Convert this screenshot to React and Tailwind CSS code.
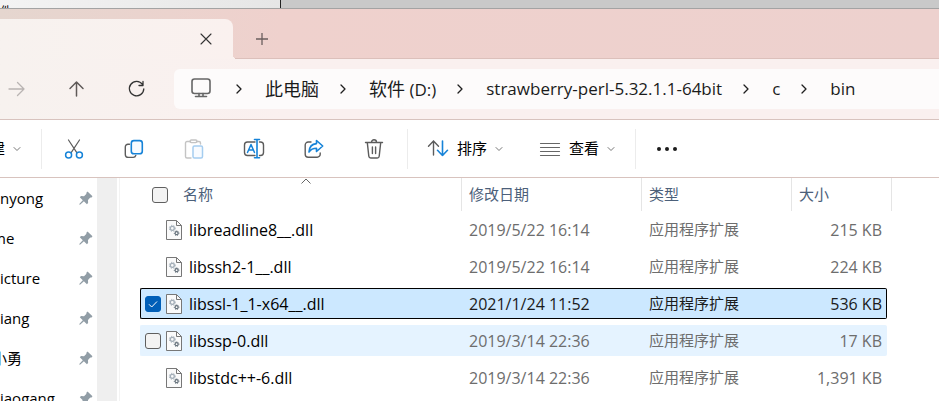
import { useState } from 'react';

const files = [
  { name: 'libreadline8__.dll', date: '2019/5/22 16:14', size: '215 KB' },
  { name: 'libssh2-1__.dll', date: '2019/5/22 16:14', size: '224 KB' },
  { name: 'libssl-1_1-x64__.dll', date: '2021/1/24 11:52', size: '536 KB' },
  { name: 'libssp-0.dll', date: '2019/3/14 22:36', size: '17 KB' },
  { name: 'libstdc++-6.dll', date: '2019/3/14 22:36', size: '1,391 KB' }
];

const pinned = [
  { label: 'nyong', className: '' },
  { label: 'me', className: '-ml-2' },
  { label: 'icture', className: '' },
  { label: 'iang', className: '' },
  { label: '小勇', className: '-ml-2' },
  { label: 'iaogang', className: '' }
];

const GRAY = '#5c5c5c';
const BLUE = '#1683d8';

const Icon = ({ size = 20, color = GRAY, width = 1.2, children }) => (
  <svg
    width={size}
    height={size}
    viewBox={`0 0 ${size} ${size}`}
    fill="none"
    stroke={color}
    strokeWidth={width}
    strokeLinecap="round"
    strokeLinejoin="round"
    className="shrink-0"
    aria-hidden="true"
  >
    {children}
  </svg>
);

const ChevronRight = () => (
  <Icon size={10} color="#1f1f1f" width={1.3}>
    <path d="M3 1l4 4-4 4" />
  </Icon>
);

const ChevronDown = () => (
  <Icon size={8} color="#777" width={1}>
    <path d="M1 2.5l3 3 3-3" />
  </Icon>
);

const CutIcon = () => (
  <Icon>
    <path d="M4.5 1l8.3 12.6M15.5 1L7.2 13.6" />
    <circle cx="4.6" cy="16" r="3" stroke={BLUE} strokeWidth="1.5" />
    <circle cx="15.4" cy="16" r="3" stroke={BLUE} strokeWidth="1.5" />
  </Icon>
);

const CopyIcon = () => (
  <Icon width={1.4}>
    <path d="M5.5 5.2H4A2.7 2.7 0 0 0 1.3 8v7.2a3.2 3.2 0 0 0 3.2 3.2h4.7a2.7 2.7 0 0 0 2.6-2" />
    <rect x="7.3" y="1.6" width="11" height="13.2" rx="2.6" fill="#f8fbff" stroke={BLUE} strokeWidth="1.6" />
  </Icon>
);

const PasteIcon = () => (
  <Icon color="#c4c4c4" width={1.4}>
    <path d="M6.5 2.5H3A1.500 1.500 0 0 0 1.5 4v13.500A1.500 1.500 0 0 0 3 19h4M12.500 2.500H15A1.500 1.500 0 0 1 16.500 4v1" />
    <rect x="6" y="1" width="7" height="2.6" rx="1.3" />
    <rect x="9" y="7" width="9.5" height="12" rx="1.5" fill="#f8fbff" stroke="#a5cdf0" strokeWidth="1.5" />
  </Icon>
);

const RenameIcon = () => (
  <Icon size={22} width={1.4}>
    <path d="M12 4H4.500a3 3 0 0 0-3 3v7.500a3 3 0 0 0 3 3H12M16.500 4h1a3 3 0 0 1 3 3v7.500a3 3 0 0 1-3 3h-1" />
    <path d="M4.500 14.500l3.500-8 3.500 8M5.700 12h4.600" stroke={BLUE} strokeWidth="1.5" />
    <path d="M14 1.500v18M11.500 1.500h5M11.500 19.800h5" stroke={BLUE} strokeWidth="1.6" />
  </Icon>
);

const ShareIcon = () => (
  <Icon width={1.4}>
    <path d="M7 3H4.200a3 3 0 0 0-3 3v9.200a3 3 0 0 0 3 3h9a3 3 0 0 0 3-3V14" />
    <path
      d="M12.500 1.500l6.200 5.500-6.200 5.500V9.300C9 9.300 6.700 10.500 5 13c.2-4.500 2.800-8 7.500-8.400z"
      stroke={BLUE}
      strokeWidth="1.6"
    />
  </Icon>
);

const TrashIcon = () => (
  <Icon width={1.4}>
    <path d="M1.500 3.500h17M3.300 3.700l1.500 13.500a2 2 0 0 0 2 1.800h6.400a2 2 0 0 0 2-1.800l1.500-13.500M7.500 3.300a2.500 2.500 0 0 1 5 0M8.400 8v6.500M11.600 8v6.500" />
  </Icon>
);

const SortIcon = () => (
  <Icon size={22} width={1.4}>
    <path d="M6.500 17V3M1.500 8.200l5-5.200 5 5.200" />
    <path d="M15.500 3v14.500M10.500 12.300l5 5.200 5-5.200" stroke={BLUE} strokeWidth="1.6" />
  </Icon>
);

const PinIcon = () => (
  <svg width="14" height="14" viewBox="0 0 14 14" fill="#919da6" className="shrink-0" aria-hidden="true">
    <path d="M8.500.5l5 4.800-1.300 1.400-.9-.2-2.300 2.600.1 3-1.200 1.100-3-3L1.300 13.500l-1 .2.200-1L3.800 9.300.8 6.200 2 5l3 .2 2.500-2.400-.3-.9z" />
  </svg>
);

const DllIcon = () => (
  <svg width="16" height="20" viewBox="0 0 16 20" fill="none" className="shrink-0" aria-hidden="true">
    <path d="M.5.5h10l5 5v14H.5z" fill="#fafafa" stroke="#777" />
    <path d="M10.500.5v5h5" stroke="#777" />
    <circle cx="6.300" cy="8.300" r="2" stroke="#a3aeb8" strokeWidth="1.300" />
    <circle cx="6.300" cy="8.300" r="3" stroke="#a3aeb8" strokeWidth="1" strokeDasharray="1.200 1.300" />
    <circle cx="10.600" cy="13.200" r="1.500" stroke="#66727c" strokeWidth="1.200" />
    <circle cx="10.600" cy="13.200" r="2.300" stroke="#66727c" strokeWidth="1" strokeDasharray="1 .9" />
  </svg>
);

const CheckBox = ({ label, checked, onChange }) => (
  <span className="relative flex w-4 h-4 shrink-0">
    <input
      type="checkbox"
      aria-label={label}
      checked={checked}
      onChange={onChange}
      className="appearance-none w-4 h-4 rounded-[3px] border border-[#5f5f5f] bg-[#f3f3f3] checked:bg-[#005fb8] checked:border-[#005fb8]"
    />
    {checked && (
      <svg className="absolute inset-0 pointer-events-none" width="16" height="16" viewBox="0 0 16 16" fill="none" stroke="#fff">
        <path d="M4 8.300l2.700 2.700L12 5.500" />
      </svg>
    )}
  </span>
);

const Divider = () => <div className="w-px h-10 bg-[#ececec] shrink-0" />;

const App = () => {
  const [selected, setSelected] = useState('libssl-1_1-x64__.dll');
  const [hovered, setHovered] = useState('libssp-0.dll');

  const toggle = (name) => setSelected((prev) => (prev === name ? '' : name));

  // Fondo y borde de cada celda según el estado de la fila
  const cellColor = (name) => {
    if (name === selected) return 'bg-[#cce8ff] border-black';
    if (name === hovered) return 'bg-[#e5f3ff] border-[#e5f3ff]';
    return 'border-transparent';
  };

  return (
    <div className="h-screen overflow-hidden flex flex-col bg-white text-black font-['Open_Sans','Noto_Sans_CJK_SC',sans-serif]">
      {/* Ventana de fondo */}
      <div className="flex h-[9px] shrink-0 overflow-hidden border-b border-[#a3a3a3]">
        <div className="w-[281px] bg-linear-to-r from-[#f3f3f3] to-[#e6e6e6] border-r border-[#222] text-xs leading-6">件</div>
        <div className="flex-1 bg-[#c9c9c9]" />
      </div>

      {/* Pestañas */}
      <header className="flex h-[50px] shrink-0 pt-[10px] bg-linear-to-r from-[#e5d6cf] via-[#efd1cd] via-30% to-[#edd1ce]">
        <div className="relative flex items-center justify-end w-[233px] pr-[17px] rounded-tr-lg bg-linear-to-r from-[#f7f2ef] to-[#faf1ef]">
          <button type="button" aria-label="关闭" className="w-5 h-5 flex items-center justify-center">
            <Icon size={12} color="#333" width={1.1}>
              <path d="M1 1l10 10M11 1L1 11" />
            </Icon>
          </button>
          {/* Curva inferior de la pestaña */}
          <span className="absolute -right-1 bottom-0 z-10 w-1 h-1 bg-[radial-gradient(circle_at_top_right,transparent_4px,#faf1ef_4px)]" />
        </div>
        <div className="flex-1 flex items-center pl-[22px] border-b border-[#dcc0bb]">
          <button type="button" aria-label="新建标签页" className="p-px">
            <Icon size={12} color="#6b5f5e" width={1.3}>
              <path d="M6 0v12M0 6h12" />
            </Icon>
          </button>
        </div>
      </header>

      {/* Barra de navegación */}
      <nav className="flex items-center h-[61px] shrink-0 border-b border-[#d8c3be] bg-linear-to-r from-[#f7f2ef] to-[#faf0ef] to-30%">
        <div className="flex items-center gap-10 pl-[7px] w-[174px] shrink-0">
          <button type="button" aria-label="前进">
            <Icon color="#b9b4b2" width={1.3}>
              <path d="M2 10h15M10.500 3.500L17 10l-6.500 6.500" />
            </Icon>
          </button>
          <button type="button" aria-label="向上">
            <Icon color="#5f5a58" width={1.5}>
              <path d="M9.500 17V3M3 9.500L9.500 3 16 9.500" />
            </Icon>
          </button>
          <button type="button" aria-label="刷新">
            <Icon color="#333" width={1.3}>
              <path d="M15.500 5.500A7.200 7.200 0 1 0 16.800 10M16 2.500v4h-4" />
            </Icon>
          </button>
        </div>
        <div className="flex items-center flex-1 h-10 pl-4 rounded-l-md bg-[#fdfbfb] whitespace-nowrap text-[17px] text-[#1b1b1b]">
          <Icon size={22} color="#666" width={1.6}>
            <rect x="2" y="1" width="18" height="14.500" rx="2.500" />
            <path d="M9 15.500V18M13 15.500V18M5.500 18.500h11" />
          </Icon>
          <div className="flex items-center pl-[22px]">
            <ChevronRight />
            <a href="#pc" className="pl-[21px] pr-[19px] text-lg">此电脑</a>
            <ChevronRight />
            <a href="#d" className="pl-[21px] pr-[19px]"><span className="text-lg">软件</span> (D:)</a>
            <ChevronRight />
            <a href="#perl" className="pl-[21px] pr-[19px]">strawberry-perl-5.32.1.1-64bit</a>
            <ChevronRight />
            <a href="#c" className="pl-[21px] pr-[19px]">c</a>
            <ChevronRight />
            <a href="#bin" className="pl-[21px] pr-[19px]">bin</a>
          </div>
        </div>
      </nav>

      {/* Barra de herramientas */}
      <div className="flex items-center h-[58px] shrink-0 border-b border-[#d8c3be] text-[15px] whitespace-nowrap">
        <button type="button" className="flex items-center gap-2 w-[41px] -ml-[10px] mr-[10px] shrink-0">
          建 <ChevronDown />
        </button>
        <Divider />
        <div className="flex items-center gap-10 pl-[22px] pr-[23px]">
          <button type="button" aria-label="剪切"><CutIcon /></button>
          <button type="button" aria-label="复制"><CopyIcon /></button>
          <button type="button" aria-label="粘贴" disabled><PasteIcon /></button>
          <button type="button" aria-label="重命名" className="-mx-px"><RenameIcon /></button>
          <button type="button" aria-label="共享"><ShareIcon /></button>
          <button type="button" aria-label="删除"><TrashIcon /></button>
        </div>
        <Divider />
        <div className="flex items-center gap-9 pl-[19px] pr-5">
          <button type="button" className="flex items-center gap-2">
            <SortIcon /> 排序 <ChevronDown />
          </button>
          <button type="button" className="flex items-center gap-2">
            <Icon size={22} color="#666">
              <path d="M1.500 5.500h19M1.500 9.500h19M1.500 13.500h19M1.500 17.500h19" />
            </Icon>
            查看 <ChevronDown />
          </button>
        </div>
        <Divider />
        <button type="button" aria-label="更多" className="ml-5">
          <svg width="22" height="6" viewBox="0 0 22 6" fill="#1b1b1b">
            <circle cx="3" cy="3" r="2" />
            <circle cx="11" cy="3" r="2" />
            <circle cx="19" cy="3" r="2" />
          </svg>
        </button>
      </div>

      <div className="flex flex-1 min-h-0">
        {/* Acceso rápido */}
        <aside className="w-[97px] shrink-0 overflow-hidden">
          <ul className="text-[15px]">
            {pinned.map(({ label, className }) => (
              <li key={label} className="flex items-center justify-between h-10 pr-1 whitespace-nowrap">
                <span className={className}>{label}</span>
                <PinIcon />
              </li>
            ))}
          </ul>
        </aside>
        <div className="w-5 shrink-0 bg-[#efefef]" />

        {/* Lista de archivos */}
        <main className="flex-1 ml-[2px] pl-5 border-l border-[#f3f3f3] overflow-hidden">
          <table className="table-fixed w-[752px] border-separate border-spacing-0 text-base whitespace-nowrap">
            <colgroup>
              <col className="w-[322px]" />
              <col className="w-[180px]" />
              <col className="w-[150px]" />
              <col className="w-[100px]" />
            </colgroup>
            <thead className="text-[15px] text-left text-[#4c607a]">
              <tr className="h-[33px]">
                <th className="relative p-0 pl-3 font-normal border-r border-[#e5e5e5]">
                  <div className="flex items-center gap-[15px]">
                    <CheckBox label="全选" checked={false} onChange={() => setSelected('')} />
                    名称
                  </div>
                  <svg className="absolute top-0 left-[161px]" width="10" height="6" viewBox="0 0 10 6" fill="none" stroke="#666">
                    <path d="M.5 5.500L5 1l4.500 4.500" />
                  </svg>
                </th>
                <th className="p-0 pl-[7px] font-normal border-r border-[#e5e5e5]">修改日期</th>
                <th className="p-0 pl-[7px] font-normal border-r border-[#e5e5e5]">类型</th>
                <th className="p-0 pl-[7px] font-normal border-r border-[#e5e5e5]">大小</th>
              </tr>
            </thead>
            <tbody>
              {files.map(({ name, date, size }) => {
                const active = name === selected;
                const cell = `flex items-center h-[31px] border-y ${cellColor(name)}`;
                const muted = active ? 'text-[#1b1b1b]' : 'text-[#6d6d6d]';
                return (
                  <tr key={name} onMouseEnter={() => setHovered(name)}>
                    <td className="p-0 py-[3px]">
                      <div className={`${cell} border-l rounded-l-xs pl-1`}>
                        <div className="w-[21px] shrink-0">
                          {(active || name === hovered) && (
                            <CheckBox label={name} checked={active} onChange={() => toggle(name)} />
                          )}
                        </div>
                        <DllIcon />
                        <span className="pl-[7px]">{name}</span>
                      </div>
                    </td>
                    <td className="p-0">
                      <div className={`${cell} ${muted} pl-[7px]`}>{date}</div>
                    </td>
                    <td className="p-0">
                      <div className={`${cell} ${muted} pl-[7px] text-[15px]`}>应用程序扩展</div>
                    </td>
                    <td className="p-0">
                      <div className={`${cell} ${muted} border-r rounded-r-xs justify-end mr-[5px] pr-1`}>{size}</div>
                    </td>
                  </tr>
                );
              })}
            </tbody>
          </table>
        </main>
      </div>
    </div>
  );
};

export default App;
